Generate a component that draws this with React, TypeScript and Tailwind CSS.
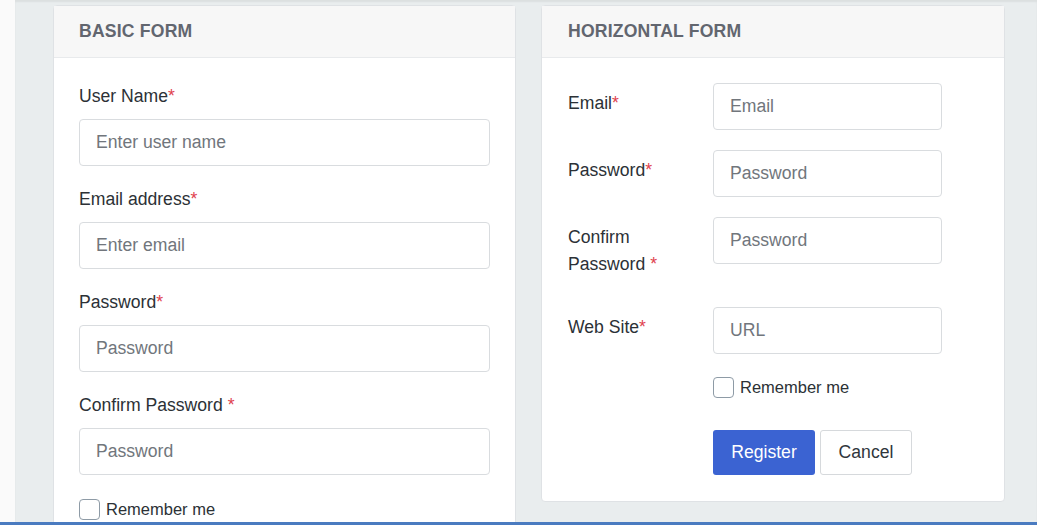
import React from "react";

function Req() {
  return <span className="text-[#e0424f]">*</span>;
}

function Input({ placeholder, className = "" }: { placeholder: string; className?: string }) {
  return (
    <input
      placeholder={placeholder}
      className={`h-[47px] rounded-[4px] border border-[#d9dcdf] bg-white px-[16px] text-[17.6px] text-[#2c3136] placeholder:text-[#71767c] outline-none ${className}`}
    />
  );
}

function Checkbox({ label }: { label: string }) {
  return (
    <label className="flex items-center gap-[6px] text-[16.5px] text-[#2c3136]">
      <span className="block h-[21px] w-[21px] rounded-[4px] border border-[#8e9ba6] bg-white" />
      <span>{label}</span>
    </label>
  );
}

function CardHeader({ title, pad }: { title: string; pad: string }) {
  return (
    <div className={`flex h-[52px] items-center border-b border-[#e8eaec] bg-[#f7f7f7] ${pad}`}>
      <h2 className="text-[17.6px] font-bold tracking-[0.2px] text-[#62666f]">{title}</h2>
    </div>
  );
}

function BasicField({ label, placeholder, spaced }: { label: string; placeholder: string; spaced?: boolean }) {
  return (
    <div className="flex flex-col">
      <div className="mb-[10px] text-[17.6px] leading-[26px] text-[#2c3136]">
        {label}
        {spaced ? " " : ""}
        <Req />
      </div>
      <Input placeholder={placeholder} className="w-full" />
    </div>
  );
}

function HField({ label, placeholder, spaced }: { label: string; placeholder: string; spaced?: boolean }) {
  return (
    <div className="flex items-start">
      <div className="w-[145px] shrink-0 pt-[7px] pb-[9px] pr-[15px] text-[17.6px] leading-[27px] text-[#2c3136]">
        {label}
        {spaced ? " " : ""}
        <Req />
      </div>
      <Input placeholder={placeholder} className="w-[229px]" />
    </div>
  );
}

export default function App() {
  return (
    <div
      className="flex h-[525px] w-[1037px] flex-col overflow-hidden bg-white"
      style={{ fontFamily: '"Liberation Sans", Arial, sans-serif' }}
    >
      <div className="flex min-h-0 flex-1">
        <div className="w-[15px] shrink-0 bg-[#fafafa]" />
        <div className="flex min-h-0 flex-1 gap-[25px] overflow-hidden bg-[#e9edee] pl-[38px] pr-[33px] pt-[5px] shadow-[inset_0_2px_2px_rgba(0,0,0,0.06)]">
          {/* Basic form */}
          <div className="w-[463px] shrink-0 self-start rounded-[4px] border border-[#dfe2e5] bg-white">
            <CardHeader title="BASIC FORM" pad="px-[25px]" />
            <div className="flex flex-col gap-[20px] px-[25px] pt-[25px]">
              <BasicField label="User Name" placeholder="Enter user name" />
              <BasicField label="Email address" placeholder="Enter email" />
              <BasicField label="Password" placeholder="Password" />
              <BasicField label="Confirm Password" placeholder="Password" spaced />
            </div>
            <div className="px-[25px] pt-[22px] pb-[20px]">
              <Checkbox label="Remember me" />
            </div>
          </div>

          {/* Horizontal form */}
          <div className="w-[464px] shrink-0 self-start rounded-[4px] border border-[#dfe2e5] bg-white">
            <CardHeader title="HORIZONTAL FORM" pad="px-[26px]" />
            <div className="flex flex-col gap-[20px] px-[26px] pt-[25px]">
              <HField label="Email" placeholder="Email" />
              <HField label="Password" placeholder="Password" />
              <HField label="Confirm Password" placeholder="Password" spaced />
              <HField label="Web Site" placeholder="URL" />
            </div>
            <div className="pl-[171px] pt-[21px]">
              <Checkbox label="Remember me" />
            </div>
            <div className="flex gap-[5px] pb-[26px] pl-[171px] pt-[30px]">
              <button className="h-[45px] w-[102px] rounded-[3px] bg-[#3b63d2] text-[17.6px] text-white">
                Register
              </button>
              <button className="h-[45px] w-[92px] rounded-[3px] border border-[#d6d9dc] bg-white text-[17.6px] text-[#30363c]">
                Cancel
              </button>
            </div>
          </div>
        </div>
      </div>
      <div className="h-[3px] shrink-0 bg-[#4a7bc0]" />
    </div>
  );
}
